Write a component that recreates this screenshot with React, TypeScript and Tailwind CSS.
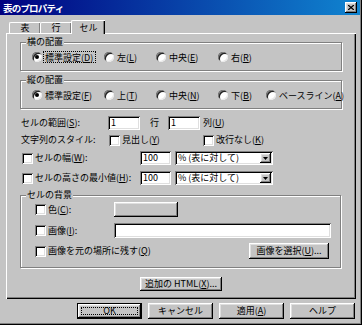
import React from "react";

const raised =
  "bg-[#c4c4c4] shadow-[inset_-1px_-1px_#000,inset_1px_1px_#fff,inset_-2px_-2px_#808080,inset_2px_2px_#dfdfdf]";
const sunken =
  "bg-white shadow-[inset_1px_1px_#808080,inset_-1px_-1px_#fff,inset_2px_2px_#000,inset_-2px_-2px_#dfdfdf]";

function Radio({ checked }: { checked?: boolean }) {
  return (
    <span className="w-[10px] h-[10px] rounded-full bg-white shadow-[inset_1px_1px_#808080,inset_-1px_-1px_#e8e8e8,inset_2px_2px_#202020] flex items-center justify-center shrink-0">
      {checked && <span className="w-[4px] h-[4px] rounded-full bg-black" />}
    </span>
  );
}

function Check() {
  return <span className={`w-[11px] h-[11px] shrink-0 ${sunken}`} />;
}

function Group({
  label,
  className,
  children,
}: {
  label: string;
  className: string;
  children: React.ReactNode;
}) {
  return (
    <div
      className={`border border-[#808080] shadow-[inset_1px_1px_#fff,1px_1px_#fff] ${className}`}
    >
      <div className="-mt-[7px] ml-[5px] w-fit px-[1px] bg-[#c4c4c4] h-[12px] leading-[12px]">
        {label}
      </div>
      {children}
    </div>
  );
}

function RadioItem({
  w,
  checked,
  focus,
  children,
}: {
  w: string;
  checked?: boolean;
  focus?: boolean;
  children: React.ReactNode;
}) {
  return (
    <div className={`flex items-center shrink-0 ${w}`}>
      <Radio checked={checked} />
      <span
        className={`ml-[1px] pl-[1px] pr-[2px] h-[12px] leading-[11px] shrink-0 ${
          focus ? "border border-dotted border-black" : "border border-transparent"
        }`}
      >
        {children}
      </span>
    </div>
  );
}

function Btn({
  w,
  h,
  children,
  def,
}: {
  w: string;
  h: string;
  children: React.ReactNode;
  def?: boolean;
}) {
  if (def) {
    return (
      <div className={`${w} ${h} border border-black`}>
        <div className={`w-full h-full ${raised} flex items-center justify-center p-[3px]`}>
          <div className="w-full h-full border border-dotted border-black flex items-center justify-center leading-[10px]">
            {children}
          </div>
        </div>
      </div>
    );
  }
  return (
    <div className={`${w} ${h} ${raised} flex items-center justify-center leading-[12px]`}>
      {children}
    </div>
  );
}

function Select() {
  return (
    <div className={`w-[98px] h-[14px] ${sunken} flex items-center pl-[3px]`}>
      <span className="leading-[12px]">% (表に対して)</span>
      <span
        className={`ml-auto mr-[2px] w-[11px] h-[10px] ${raised} flex items-center justify-center`}
      >
        <svg width="5" height="3" viewBox="0 0 5 3">
          <path d="M0 0H5L2.5 3Z" fill="#000" />
        </svg>
      </span>
    </div>
  );
}

export default function App() {
  return (
    <div className="w-[362px] h-[325px] bg-[#c4c4c4] font-['Noto_Sans_CJK_JP','Noto_Sans_CJK_SC',sans-serif] text-[9px] text-black leading-[12px] whitespace-nowrap shadow-[inset_-1px_-1px_#000,inset_-2px_-2px_#808080] overflow-hidden">
      {/* title bar */}
      <div className="w-[360px] h-[15px] bg-[linear-gradient(90deg,#000080,#1084d0)] flex items-center pl-[3px] pr-[3px]">
        <span className="text-white font-bold text-[9.5px] tracking-[-0.8px] leading-[12px]">
          表のプロパティ
        </span>
        <span
          className={`ml-auto w-[12px] h-[11px] ${raised} flex items-center justify-center`}
        >
          <svg width="6" height="5" viewBox="0 0 6 5">
            <path d="M0 0L6 5M6 0L0 5" stroke="#000" strokeWidth="1.3" />
          </svg>
        </span>
      </div>

      {/* tabs */}
      <div className="h-[18px] flex items-end pl-[9px]">
        <div className="w-[31px] h-[11px] border-l border-t border-white rounded-tl-[2px] shadow-[inset_-1px_0_#808080] flex items-center justify-center leading-[10px]">
          表
        </div>
        <div className="w-[31px] h-[11px] border-l border-t border-white rounded-tl-[2px] shadow-[inset_-1px_0_#808080] flex items-center justify-center leading-[10px]">
          行
        </div>
        <div className="relative z-10 -mb-[1px] w-[34px] h-[14px] bg-[#c4c4c4] border-l border-t border-white rounded-tl-[2px] shadow-[inset_-1px_0_#000,inset_-2px_0_#808080] flex justify-center pt-[1px] leading-[11px]">
          セル
        </div>
      </div>

      {/* panel */}
      <div className="ml-[6px] w-[350px] h-[266px] border-l border-t border-white shadow-[inset_-1px_-1px_#000,inset_-2px_-2px_#808080] flex flex-col">
        <Group label="横の配置" className="ml-[13px] mt-[8px] w-[322px] h-[29px]">
          <div className="mt-[3px] h-[12px] flex items-center pl-[11px]">
            <RadioItem w="w-[72px]" checked focus>
              標準設定(<u>D</u>)
            </RadioItem>
            <RadioItem w="w-[52px]">
              左(<u>L</u>)
            </RadioItem>
            <RadioItem w="w-[62px]">
              中央(<u>E</u>)
            </RadioItem>
            <RadioItem w="w-[48px]">
              右(<u>R</u>)
            </RadioItem>
          </div>
        </Group>

        <Group label="縦の配置" className="ml-[13px] mt-[9px] w-[322px] h-[29px]">
          <div className="mt-[3px] h-[12px] flex items-center pl-[11px]">
            <RadioItem w="w-[72px]" checked>
              標準設定(<u>F</u>)
            </RadioItem>
            <RadioItem w="w-[52px]">
              上(<u>T</u>)
            </RadioItem>
            <RadioItem w="w-[62px]">
              中央(<u>N</u>)
            </RadioItem>
            <RadioItem w="w-[48px]">
              下(<u>B</u>)
            </RadioItem>
            <RadioItem w="w-[70px]">
              ベースライン(<u>A</u>)
            </RadioItem>
          </div>
        </Group>

        {/* range row */}
        <div className="mt-[7px] ml-[14px] h-[14px] flex items-center">
          <span className="w-[87px]">
            セルの範囲(<u>S</u>):
          </span>
          <div className={`w-[32px] h-[14px] ${sunken} pl-[3px] flex items-center`}>1</div>
          <span className="w-[28px] pl-[10px]">行</span>
          <div className={`w-[32px] h-[14px] ${sunken} pl-[3px] flex items-center`}>1</div>
          <span className="ml-[3px]">
            列(<u>U</u>)
          </span>
        </div>

        {/* style row */}
        <div className="mt-[3px] ml-[14px] h-[14px] flex items-center">
          <span className="w-[88px]">文字列のスタイル:</span>
          <div className="w-[94px] flex items-center">
            <Check />
            <span className="ml-[2px]">
              見出し(<u>Y</u>)
            </span>
          </div>
          <div className="flex items-center">
            <Check />
            <span className="ml-[2px]">
              改行なし(<u>K</u>)
            </span>
          </div>
        </div>

        {/* width row */}
        <div className="mt-[4px] ml-[15px] h-[14px] flex items-center">
          <div className="w-[118px] flex items-center">
            <Check />
            <span className="ml-[2px]">
              セルの幅(<u>W</u>):
            </span>
          </div>
          <div className={`w-[31px] h-[14px] ${sunken} pl-[3px] flex items-center`}>100</div>
          <div className="ml-[4px]">
            <Select />
          </div>
        </div>

        {/* height row */}
        <div className="mt-[6px] ml-[15px] h-[14px] flex items-center">
          <div className="w-[118px] flex items-center">
            <Check />
            <span className="ml-[2px]">
              セルの高さの最小値(<u>H</u>):
            </span>
          </div>
          <div className={`w-[31px] h-[14px] ${sunken} pl-[3px] flex items-center`}>100</div>
          <div className="ml-[4px]">
            <Select />
          </div>
        </div>

        {/* background group */}
        <Group label="セルの背景" className="ml-[13px] mt-[10px] w-[321px] h-[73px]">
          <div className="mt-[1px] h-[15px] pl-[14px] flex items-center">
            <div className="w-[79px] flex items-center">
              <Check />
              <span className="ml-[2px]">
                色(<u>C</u>):
              </span>
            </div>
            <div className={`w-[64px] h-[15px] ${raised}`} />
          </div>
          <div className="mt-[6px] h-[15px] pl-[14px] flex items-center">
            <div className="w-[79px] flex items-center">
              <Check />
              <span className="ml-[2px]">
                画像(<u>I</u>):
              </span>
            </div>
            <div className={`w-[217px] h-[15px] ${sunken}`} />
          </div>
          <div className="mt-[5px] h-[16px] pl-[14px] flex items-center">
            <div className="w-[214px] flex items-center">
              <Check />
              <span className="ml-[2px]">
                画像を元の場所に残す(<u>Q</u>)
              </span>
            </div>
            <Btn w="w-[80px]" h="h-[16px]">
              画像を選択(<u>U</u>)...
            </Btn>
          </div>
        </Group>

        <div className="mt-[9px] ml-[133px]">
          <Btn w="w-[82px]" h="h-[14px]">
            追加の HTML(<u>X</u>)...
          </Btn>
        </div>
      </div>

      {/* buttons */}
      <div className="mt-[4px] ml-[77px] flex gap-[6px]">
        <Btn w="w-[65px]" h="h-[16px]" def>
          OK
        </Btn>
        <Btn w="w-[65px]" h="h-[16px]">
          キャンセル
        </Btn>
        <Btn w="w-[65px]" h="h-[16px]">
          適用(<u>A</u>)
        </Btn>
        <Btn w="w-[65px]" h="h-[16px]">
          ヘルプ
        </Btn>
      </div>
    </div>
  );
}
